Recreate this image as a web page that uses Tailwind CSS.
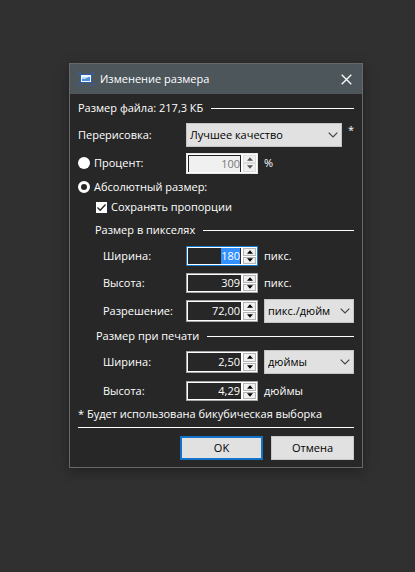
<!DOCTYPE html>
<html lang="ru">
<head>
<meta charset="utf-8">
<title>Изменение размера</title>
<script src="https://cdn.jsdelivr.net/npm/@tailwindcss/browser@4"></script>
</head>
<body class="min-h-screen bg-[#303030] pt-[63px] pr-[52px] pl-[69px] font-['Open_Sans','Noto_Sans',sans-serif] text-[11px] leading-4 text-white">
<svg class="hidden">
  <symbol id="up" viewBox="0 0 7 4"><path d="M0 4 3.5 0 7 4z" fill="currentColor"/></symbol>
  <symbol id="down" viewBox="0 0 7 4"><path d="M0 0h7L3.500 4z" fill="currentColor"/></symbol>
  <symbol id="chevron" viewBox="0 0 10 6"><path d="M.7.7 5 5 9.300.7" fill="none" stroke="currentColor" stroke-width="1.200"/></symbol>
</svg>
<main role="dialog" aria-labelledby="title" class="border border-[#66696b] bg-[#272727] shadow-[0_3px_12px_rgba(0,0,0,0.35)]">
  <header class="flex h-[30px] items-center bg-[#4c565b] px-2">
    <svg class="h-[14px] w-4" viewBox="0 0 16 14">
      <path d="M.5 3.500v-3h3M12.500.5h3v3M.5 10.500v3h3M12.500 13.500h3v-3" fill="none" stroke="#3f59a0" stroke-width="1"/>
      <rect x="2" y="2" width="12" height="9" fill="#2c5cb0"/>
      <rect x="3" y="3" width="10" height="7" fill="#f4f8ff"/>
      <rect x="4" y="5" width="8" height="4" fill="#4d8fd8"/>
      <path d="M4 5h7L7 7H4z" fill="#b5dcf8"/>
    </svg>
    <h1 id="title" class="ml-[6px] flex-1">Изменение размера</h1>
    <button type="button" aria-label="Закрыть" class="flex size-4 items-center justify-center">
      <svg class="size-[11px]" viewBox="0 0 11 11"><path d="M.7.7l9.600 9.600M10.300.7.7 10.300" stroke="#fff" stroke-width="1.300"/></svg>
    </button>
  </header>
  <form class="px-2 pb-[7px]">
    <div class="flex h-7 items-center gap-2"><span>Размер файла: 217,3 КБ</span><hr class="flex-1 border-white"></div>

    <div class="flex h-[26px] items-center">
      <label for="resample" class="w-[108px]">Перерисовка:</label>
      <div class="relative mr-[6px] flex-1">
        <select id="resample" class="block h-6 w-full appearance-none border border-[#c4c4c4] bg-[#e1e1e1] pl-[3px] text-black"><option>Лучшее качество</option></select>
        <svg class="pointer-events-none absolute top-[9px] right-1 h-[6px] w-[10px] text-[#444]"><use href="#chevron"/></svg>
      </div>
      <span class="w-[6px] self-start">*</span>
    </div>

    <div class="flex h-[30px] items-center">
      <div class="flex w-[108px] items-center gap-1">
        <input id="percent" type="radio" name="mode" class="size-3 appearance-none rounded-full bg-white checked:border-3 checked:border-white checked:bg-[#272727]">
        <label for="percent">Процент:</label>
      </div>
      <div class="flex h-[21px] w-[72px] border border-[#e6e6e6] bg-white p-px">
        <input aria-label="Процент" value="100" disabled class="w-0 flex-1 border-x border-t border-[#222] bg-[#f0f0f0] text-right text-[#777]">
        <div class="ml-[2px] flex w-[13px] flex-col text-[#555]">
          <button type="button" disabled aria-label="Больше" class="flex flex-1 items-center justify-center border border-[#ddd] bg-[#f0f0f0]"><svg class="h-1 w-[6px]"><use href="#up"/></svg></button>
          <button type="button" disabled aria-label="Меньше" class="flex flex-1 items-center justify-center border border-[#ddd] bg-[#f0f0f0]"><svg class="h-1 w-[6px]"><use href="#down"/></svg></button>
        </div>
      </div>
      <span class="ml-[6px]">%</span>
    </div>

    <div class="flex h-[18px] items-center gap-1">
      <input id="absolute" type="radio" name="mode" checked class="size-3 appearance-none rounded-full bg-white checked:border-3 checked:border-white checked:bg-[#272727]">
      <label for="absolute">Абсолютный размер:</label>
    </div>

    <div class="flex h-[22px] items-center gap-1 pl-[18px]">
      <span class="relative size-[11px]">
        <input id="keep" type="checkbox" checked class="block size-[11px] appearance-none bg-white">
        <svg class="pointer-events-none absolute inset-0 size-[11px]" viewBox="0 0 11 11"><path d="M1.500 5.500 4.200 8.200 9.500 2.500" fill="none" stroke="#222" stroke-width="1.300"/></svg>
      </span>
      <label for="keep">Сохранять пропорции</label>
    </div>

    <div class="flex h-6 items-center gap-2 pl-[17px]"><span>Размер в пикселях</span><hr class="flex-1 border-white"></div>

    <div class="flex h-7 items-center">
      <label for="pw" class="w-[108px] pl-[25px]">Ширина:</label>
      <div class="flex h-5 w-[72px] border border-[#1878cc] bg-white p-px">
        <input id="pw" value="180" class="w-0 flex-1 bg-[#272727] pr-px text-right caret-transparent outline-none selection:bg-[#3390ff] selection:text-white">
        <div class="ml-[2px] flex w-[13px] flex-col gap-px text-black">
          <button type="button" aria-label="Больше" class="flex flex-1 items-center justify-center border border-[#b5b5b5] bg-[#f0f0f0]"><svg class="h-1 w-[6px]"><use href="#up"/></svg></button>
          <button type="button" aria-label="Меньше" class="flex flex-1 items-center justify-center border border-[#b5b5b5] bg-[#f0f0f0]"><svg class="h-1 w-[6px]"><use href="#down"/></svg></button>
        </div>
      </div>
      <span class="ml-[6px]">пикс.</span>
    </div>

    <div class="flex h-[26px] items-center">
      <label for="ph" class="w-[108px] pl-[25px]">Высота:</label>
      <div class="flex h-5 w-[72px] border border-[#a8a8a8] bg-white p-px">
        <input id="ph" value="309" class="w-0 flex-1 bg-[#272727] pr-px text-right outline-none">
        <div class="ml-[2px] flex w-[13px] flex-col gap-px text-black">
          <button type="button" aria-label="Больше" class="flex flex-1 items-center justify-center border border-[#b5b5b5] bg-[#f0f0f0]"><svg class="h-1 w-[6px]"><use href="#up"/></svg></button>
          <button type="button" aria-label="Меньше" class="flex flex-1 items-center justify-center border border-[#b5b5b5] bg-[#f0f0f0]"><svg class="h-1 w-[6px]"><use href="#down"/></svg></button>
        </div>
      </div>
      <span class="ml-[6px]">пикс.</span>
    </div>

    <div class="flex h-[30px] items-center">
      <label for="res" class="w-[108px] pl-[25px]">Разрешение:</label>
      <div class="flex h-[22px] w-[72px] border border-[#a8a8a8] bg-white p-px">
        <input id="res" value="72,00" class="w-0 flex-1 bg-[#272727] pr-px text-right outline-none">
        <div class="ml-[2px] flex w-[13px] flex-col gap-px text-black">
          <button type="button" aria-label="Больше" class="flex flex-1 items-center justify-center border border-[#b5b5b5] bg-[#f0f0f0]"><svg class="h-1 w-[6px]"><use href="#up"/></svg></button>
          <button type="button" aria-label="Меньше" class="flex flex-1 items-center justify-center border border-[#b5b5b5] bg-[#f0f0f0]"><svg class="h-1 w-[6px]"><use href="#down"/></svg></button>
        </div>
      </div>
      <div class="relative ml-[6px] flex-1">
        <select aria-label="Единицы разрешения" class="block h-6 w-full appearance-none border border-[#c4c4c4] bg-[#e1e1e1] pl-[3px] text-black"><option>пикс./дюйм</option></select>
        <svg class="pointer-events-none absolute top-[9px] right-1 h-[6px] w-[10px] text-[#444]"><use href="#chevron"/></svg>
      </div>
    </div>

    <div class="flex h-5 items-center gap-2 pl-[18px]"><span>Размер при печати</span><hr class="flex-1 border-white"></div>

    <div class="flex h-8 items-center">
      <label for="w" class="w-[108px] pl-[25px]">Ширина:</label>
      <div class="flex h-[22px] w-[72px] border border-[#a8a8a8] bg-white p-px">
        <input id="w" value="2,50" class="w-0 flex-1 bg-[#272727] pr-px text-right outline-none">
        <div class="ml-[2px] flex w-[13px] flex-col gap-px text-black">
          <button type="button" aria-label="Больше" class="flex flex-1 items-center justify-center border border-[#b5b5b5] bg-[#f0f0f0]"><svg class="h-1 w-[6px]"><use href="#up"/></svg></button>
          <button type="button" aria-label="Меньше" class="flex flex-1 items-center justify-center border border-[#b5b5b5] bg-[#f0f0f0]"><svg class="h-1 w-[6px]"><use href="#down"/></svg></button>
        </div>
      </div>
      <div class="relative ml-[6px] flex-1">
        <select aria-label="Единицы размера" class="block h-6 w-full appearance-none border border-[#c4c4c4] bg-[#e1e1e1] pl-[3px] text-black"><option>дюймы</option></select>
        <svg class="pointer-events-none absolute top-[9px] right-1 h-[6px] w-[10px] text-[#444]"><use href="#chevron"/></svg>
      </div>
    </div>

    <div class="flex h-[26px] items-center">
      <label for="h" class="w-[108px] pl-[25px]">Высота:</label>
      <div class="flex h-5 w-[72px] border border-[#a8a8a8] bg-white p-px">
        <input id="h" value="4,29" class="w-0 flex-1 bg-[#272727] pr-px text-right outline-none">
        <div class="ml-[2px] flex w-[13px] flex-col gap-px text-black">
          <button type="button" aria-label="Больше" class="flex flex-1 items-center justify-center border border-[#b5b5b5] bg-[#f0f0f0]"><svg class="h-1 w-[6px]"><use href="#up"/></svg></button>
          <button type="button" aria-label="Меньше" class="flex flex-1 items-center justify-center border border-[#b5b5b5] bg-[#f0f0f0]"><svg class="h-1 w-[6px]"><use href="#down"/></svg></button>
        </div>
      </div>
      <span class="ml-[6px]">дюймы</span>
    </div>

    <p class="h-6 border-b border-white pt-[2px] whitespace-nowrap">* Будет использована бикубическая выборка</p>

    <div class="flex justify-end gap-2 pt-2 text-black">
      <button type="submit" class="h-6 w-[83px] border-2 border-[#1273c8] bg-[#e1e1e1]">OK</button>
      <button type="button" class="h-6 w-[83px] border border-[#c8c8c8] bg-[#e1e1e1]">Отмена</button>
    </div>
  </form>
</main>
<script>
  const field = document.getElementById('pw');
  field.focus();
  field.select();
</script>
</body>
</html>
